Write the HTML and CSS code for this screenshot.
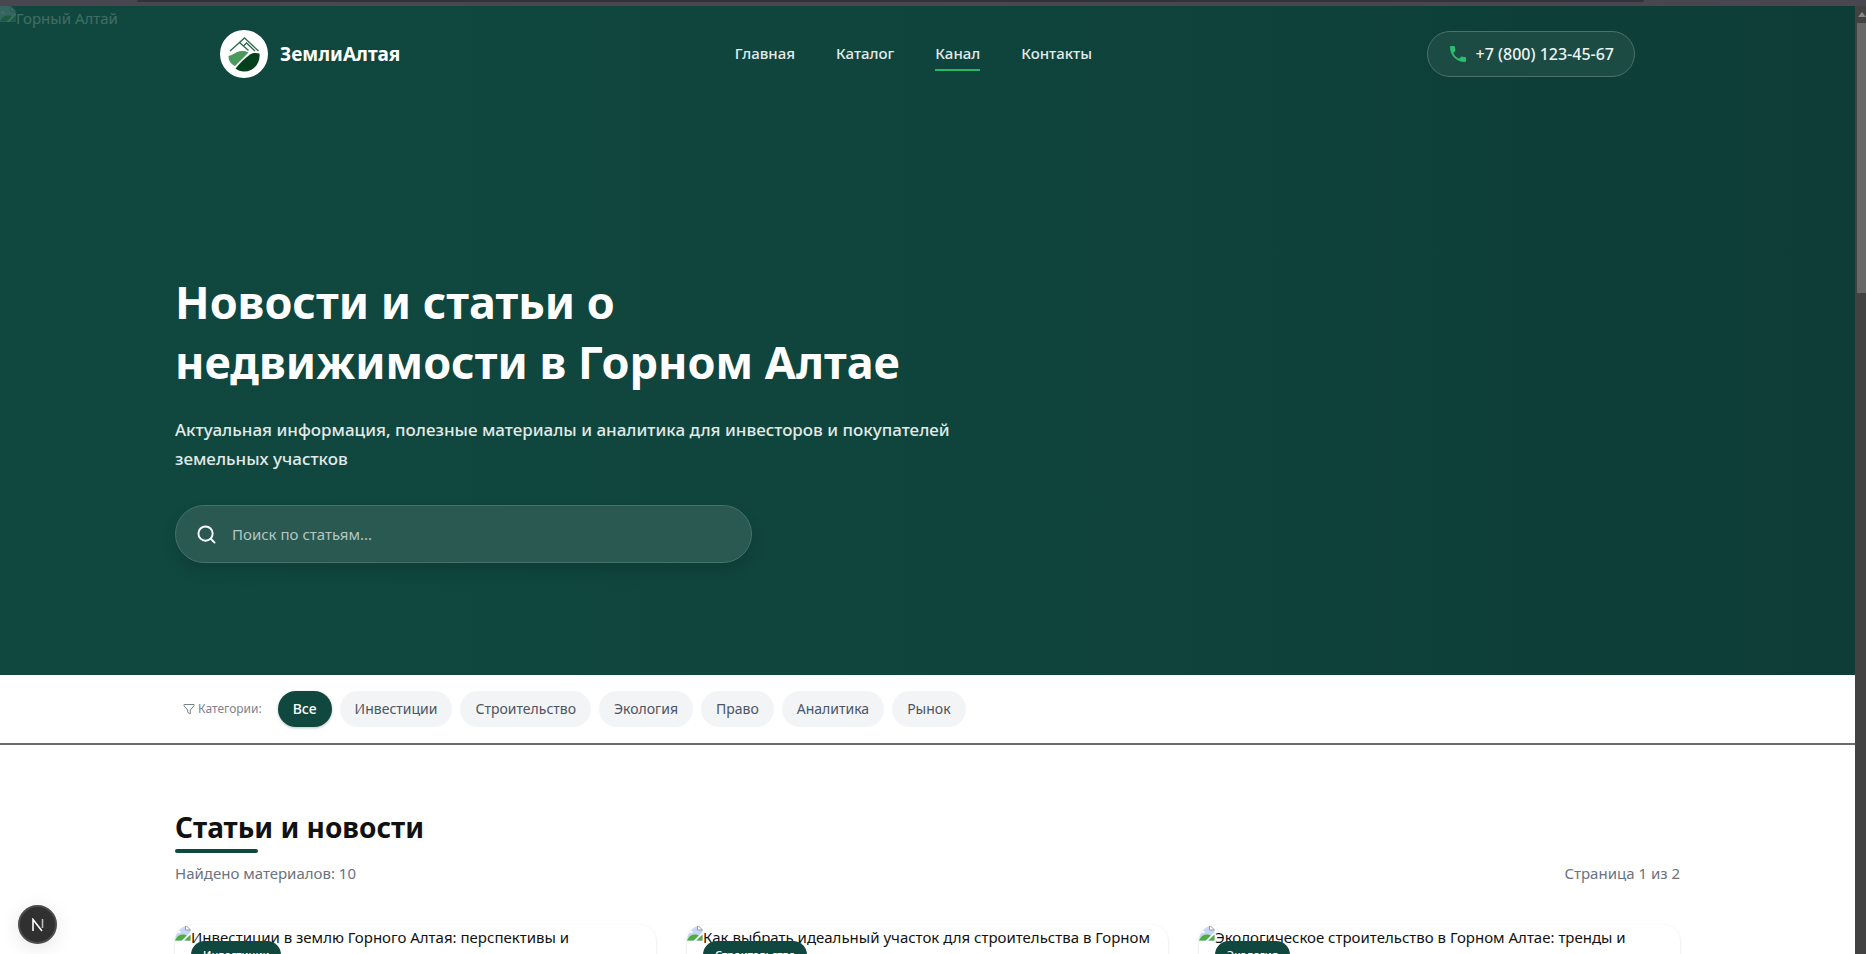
FILE: index.html
```html
<!DOCTYPE html>
<html lang="ru">
<head>
<meta charset="utf-8">
<meta name="viewport" content="width=device-width, initial-scale=1">
<title>Новости и статьи — ЗемлиАлтая</title>
<link rel="stylesheet" href="styles.css">
</head>
<body>
<svg class="sprite" aria-hidden="true">
  <symbol id="broken" viewBox="0 0 16 16">
    <path d="M0 0h10.500l5 5v11H0z" fill="#c6d7f5"/>
    <path d="M10.500 0v5h5z" fill="#fff" stroke="#9a9a9a"/>
    <path d="M1 6.500c0-1.800 2.600-2.200 3.200-.8 1.600-.2 2 2 .6 2.300H2C1.300 8 1 7.300 1 6.500z" fill="#fff"/>
    <path d="M0 15.500c2-4.500 5-6 8-6 1.600 0 2.700.4 3.800 1L7 15.500z" fill="#4fae37"/>
    <path d="M6.500 16 15.800 7v2.500L9 16z" fill="#fff"/>
    <path d="M9.500 15.500h6v-6z" fill="#4fae37"/>
  </symbol>
</svg>
<div class="window">
  <div class="chrome"><div class="chrome-tab"></div></div>
  <div class="page">
    <section class="hero">
      <div class="hero-alt"><svg class="broken"><use href="#broken"/></svg>Горный Алтай</div>
      <header class="header">
        <a class="brand" href="#">
          <svg class="logo" viewBox="0 0 48 48" aria-hidden="true">
            <circle cx="24" cy="24" r="24" fill="#fff"/>
            <path d="M10 21 24.500 8 38.500 21M19.500 12.500 28.500 20.500M23.500 16l3-3L35 21" fill="none" stroke="#2a6b4a" stroke-width="1.300"/>
            <path d="M8.500 26c5-1 8-5 13-5 3 0 5 0 7 1.500L15 36C11 34 8.500 31 8.500 26z" fill="#4a9a5b"/>
            <path d="M15.500 38.500C20 33 25 28 30 24.500c3-1.700 6-1.800 9.500-1C40.500 33 34 41.500 24 41.500c-3.500 0-6-1-8.500-3z" fill="#04401c"/>
          </svg>
          <span class="brand-name">ЗемлиАлтая</span>
        </a>
        <nav class="nav">
          <a class="nav-link" href="#">Главная</a>
          <a class="nav-link" href="#">Каталог</a>
          <a class="nav-link nav-link-active" href="#">Канал</a>
          <a class="nav-link" href="#">Контакты</a>
        </nav>
        <a class="phone" href="tel:+78001234567">
          <svg class="phone-icon" viewBox="3 3 18 18" aria-hidden="true"><path fill="#27c06c" d="M6.620 10.790c1.440 2.830 3.760 5.140 6.590 6.590l2.200-2.200c.27-.27.67-.36 1.020-.24 1.120.37 2.330.57 3.570.57.550 0 1 .45 1 1V20c0 .55-.45 1-1 1-9.390 0-17-7.610-17-17 0-.55.450-1 1-1h3.500c.55 0 1 .45 1 1 0 1.250.200 2.450.570 3.570.110.350.030.740-.250 1.020l-2.200 2.200z"/></svg>
          +7 (800) 123-45-67
        </a>
      </header>
      <div class="container hero-content">
        <h1 class="hero-title">Новости и статьи о<br>недвижимости в Горном Алтае</h1>
        <p class="hero-text">Актуальная информация, полезные материалы и аналитика для инвесторов и покупателей<br>земельных участков</p>
        <form class="search">
          <svg class="search-icon" viewBox="0 0 20 20" aria-hidden="true"><circle cx="9" cy="9" r="7.500"/><path d="m14.500 14.500 4 4"/></svg>
          <input class="search-input" type="search" placeholder="Поиск по статьям..." aria-label="Поиск по статьям">
        </form>
      </div>
    </section>
    <section class="filters">
      <div class="container filters-row">
        <span class="filters-label"><svg class="funnel" viewBox="0 0 12 12" aria-hidden="true"><path d="M1 1.500h10v1.300L7.300 7v3.800L4.700 9.300V7L1 2.800z"/></svg>Категории:</span>
        <button class="chip chip-active" type="button">Все</button>
        <button class="chip" type="button">Инвестиции</button>
        <button class="chip" type="button">Строительство</button>
        <button class="chip" type="button">Экология</button>
        <button class="chip" type="button">Право</button>
        <button class="chip" type="button">Аналитика</button>
        <button class="chip" type="button">Рынок</button>
      </div>
    </section>
    <main class="container articles">
      <h2 class="articles-title">Статьи и новости</h2>
      <div class="articles-meta"><span>Найдено материалов: 10</span><span>Страница 1 из 2</span></div>
      <div class="cards">
        <article class="card"><div class="card-alt"><svg class="broken"><use href="#broken"/></svg>Инвестиции в землю Горного Алтая: перспективы и</div><span class="badge">Инвестиции</span></article>
        <article class="card"><div class="card-alt"><svg class="broken"><use href="#broken"/></svg>Как выбрать идеальный участок для строительства в Горном</div><span class="badge">Строительство</span></article>
        <article class="card"><div class="card-alt"><svg class="broken"><use href="#broken"/></svg>Экологическое строительство в Горном Алтае: тренды и</div><span class="badge">Экология</span></article>
      </div>
    </main>
  </div>
  <div class="scrollbar"><div class="scroll-arrow"></div><div class="scroll-thumb"></div></div>
  <button class="dev-button" type="button" aria-label="Next.js">
    <svg class="dev-icon" viewBox="0 0 14 14" aria-hidden="true"><path d="M2 13V1.500L11 13" fill="none" stroke="#fff" stroke-width="1.600"/><path d="M11.500 1v9" stroke="#bbb" stroke-width="1.600"/></svg>
  </button>
</div>
</body>
</html>
```
FILE: styles.css
```css
* { box-sizing: border-box; }

body {
  margin: 0;
  font-family: "Noto Sans", "Open Sans", sans-serif;
  font-size: 15px;
  line-height: 24px;
  color: #111;
}

a { color: inherit; text-decoration: none; }
button, input { font: inherit; }
.sprite { position: absolute; width: 0; height: 0; }

.window {
  display: grid;
  grid-template: 6px 1fr / 1fr 11px;
  height: 100vh;
  overflow: hidden;
}

.chrome { grid-column: 1 / -1; background: #48464f; }
.chrome-tab {
  height: 2px;
  margin: 0 222px 0 137px;
  background: #33313a;
  border-radius: 0 0 6px 6px;
}

.page { overflow: hidden; background: #fff; min-height: 0; }
.container { width: 81%; max-width: 1505px; margin: 0 auto; }
@media (min-width: 1800px) { .container { width: 1505px; } }

.hero {
  position: relative;
  padding: 24px 0 112px;
  color: #fff;
  background: linear-gradient(90deg, #10483f 0%, #0f453d 45%, #0d3d36 100%);
}
.hero-alt {
  position: absolute;
  top: 0;
  left: 0;
  display: flex;
  opacity: .2;
}
.broken { width: 16px; height: 16px; flex: none; }

.header {
  display: flex;
  justify-content: space-between;
  align-items: center;
  width: calc(100% - 440px);
  margin: 0 auto;
}
.brand { display: flex; align-items: center; gap: 12px; }
.logo { width: 48px; height: 48px; }
.brand-name { font-size: 19px; font-weight: 700; }
.nav { display: flex; gap: 41px; font-weight: 500; color: #e3ebe9; }
.nav-link { padding: 4px 0; border-bottom: 2px solid transparent; }
.nav-link-active { border-color: #27b765; }
.phone {
  display: flex;
  align-items: center;
  gap: 10px;
  padding: 10px 20px 10px 22px;
  border: 1px solid #4d7169;
  border-radius: 24px;
  background: #1b4b43;
  font-size: 16px;
  font-weight: 500;
  color: #eef3f2;
}
.phone-icon { width: 16px; height: 16px; }

.hero-content { padding-top: 194px; }
.hero-title { margin: 0 0 23px; font-size: 45px; line-height: 60px; font-weight: 700; }
.hero-text { margin: 0 0 32px; font-size: 17px; line-height: 29px; color: #e2eae8; font-weight: 500; }
.search {
  display: flex;
  align-items: center;
  gap: 16px;
  max-width: 577px;
  height: 58px;
  padding: 0 21px;
  border: 1px solid #467068;
  border-radius: 29px;
  background: #2a5951;
  box-shadow: 0 8px 16px rgba(0, 0, 0, .12);
}
.search-icon { width: 19px; height: 19px; fill: none; stroke: #fff; stroke-width: 2px; stroke-linecap: round; }
.search-input { flex: 1; padding: 0; border: 0; outline: 0; background: none; color: #fff; }
.search-input::placeholder { color: #b5c5c1; opacity: 1; }

.filters { padding: 16px 0; border-bottom: 2px solid #6b6b6e; }
.filters-row { display: flex; align-items: center; gap: 8px; padding-left: 8px; }
.filters-label { display: flex; align-items: center; gap: 3px; margin-right: 8px; font-size: 12px; color: #7b8290; }
.funnel { width: 12px; height: 12px; fill: none; stroke: #7b8290; stroke-linejoin: round; }
.chip {
  height: 36px;
  padding: 0 15px;
  border: 0;
  border-radius: 18px;
  background: #f3f4f6;
  color: #4b5563;
  font-size: 14px;
}
.chip-active { background: #10473e; color: #fff; font-weight: 500; box-shadow: 0 1px 3px rgba(0, 0, 0, .25); }

.articles { padding-top: 64px; }
.articles-title { margin: 0; font-size: 28px; line-height: 36px; font-weight: 700; }
.articles-title::after { content: ""; display: block; width: 83px; height: 4px; margin-top: 4px; border-radius: 2px; background: #10473e; }
.articles-meta { display: flex; justify-content: space-between; margin-top: 8px; color: #6b7280; }
.cards { display: grid; grid-template-columns: repeat(3, 1fr); gap: 31px; margin-top: 40px; }
.card {
  position: relative;
  height: 400px;
  border-radius: 16px;
  overflow: hidden;
  box-shadow: 0 1px 3px rgba(0, 0, 0, .12);
}
.card-alt { display: flex; white-space: nowrap; }
.badge {
  position: absolute;
  top: 16px;
  left: 16px;
  padding: 2px 12px;
  border-radius: 14px;
  background: #10473e;
  color: #fff;
  font-size: 11px;
  font-weight: 500;
}

.scrollbar { background: #424242; padding-left: 2px; }
.scroll-arrow { height: 17px; display: flex; align-items: center; justify-content: end; }
.scroll-arrow::before { content: ""; border: 4px solid transparent; border-top: 0; border-bottom: 5px solid #888; }
.scroll-thumb { height: 270px; background: #686868; }

.dev-button {
  position: fixed;
  left: 18px;
  bottom: 10px;
  display: grid;
  place-items: center;
  width: 39px;
  height: 39px;
  padding: 0;
  border: 2px solid #4c4c4c;
  border-radius: 50%;
  background: #303030;
  box-shadow: 0 4px 20px rgba(0, 0, 0, .1);
}
.dev-icon { width: 14px; height: 14px; }
```
